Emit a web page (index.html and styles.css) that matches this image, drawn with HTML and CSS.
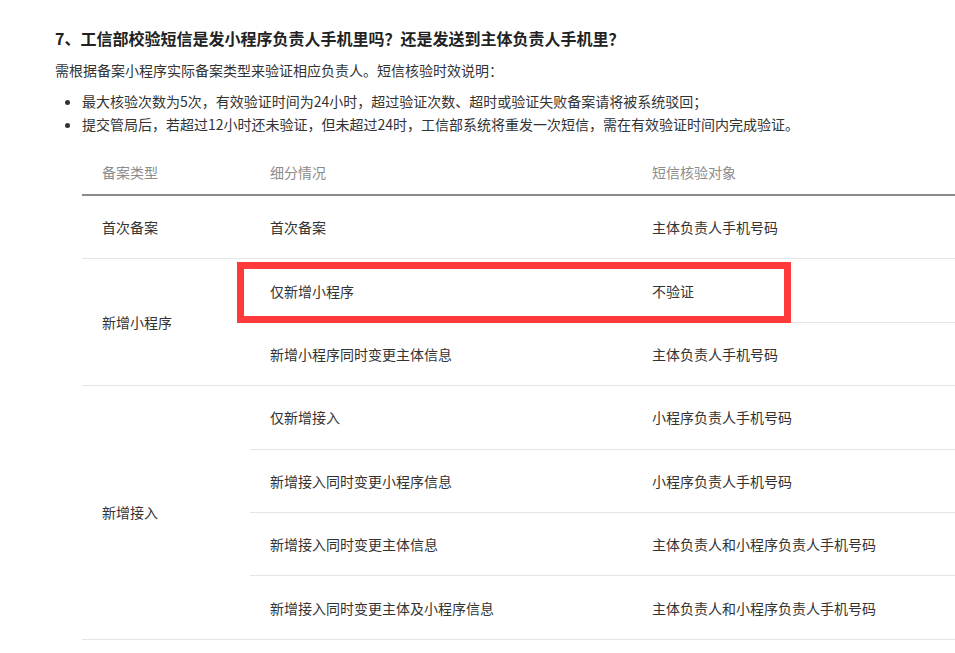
FILE: index.html
```html
<!DOCTYPE html>
<html lang="zh-CN">
<head>
<meta charset="utf-8">
<link rel="stylesheet" href="styles.css">
</head>
<body>
<div class="article">
  <h3 class="title">7、工信部校验短信是发小程序负责人手机里吗？还是发送到主体负责人手机里？</h3>
  <p class="desc">需根据备案小程序实际备案类型来验证相应负责人。短信核验时效说明：</p>
  <ul class="notes">
    <li>最大核验次数为5次，有效验证时间为24小时，超过验证次数、超时或验证失败备案请将被系统驳回；</li>
    <li>提交管局后，若超过12小时还未验证，但未超过24时，工信部系统将重发一次短信，需在有效验证时间内完成验证。</li>
  </ul>
  <div class="table-wrap">
    <table class="sms-table">
      <colgroup>
        <col class="c1"><col class="c2"><col class="c3">
      </colgroup>
      <thead>
        <tr><th>备案类型</th><th>细分情况</th><th>短信核验对象</th></tr>
      </thead>
      <tbody>
        <tr><td>首次备案</td><td>首次备案</td><td>主体负责人手机号码</td></tr>
        <tr><td rowspan="2">新增小程序</td><td>仅新增小程序</td><td>不验证</td></tr>
        <tr><td>新增小程序同时变更主体信息</td><td>主体负责人手机号码</td></tr>
        <tr><td rowspan="4">新增接入</td><td>仅新增接入</td><td>小程序负责人手机号码</td></tr>
        <tr><td>新增接入同时变更小程序信息</td><td>小程序负责人手机号码</td></tr>
        <tr><td>新增接入同时变更主体信息</td><td>主体负责人和小程序负责人手机号码</td></tr>
        <tr><td>新增接入同时变更主体及小程序信息</td><td>主体负责人和小程序负责人手机号码</td></tr>
      </tbody>
    </table>
    <div class="highlight"></div>
  </div>
</div>
</body>
</html>
```

FILE: styles.css
```css
html, body {
  margin: 0;
  padding: 0;
  background: #fff;
  overflow: hidden;
}
body {
  font-family: "Microsoft YaHei", "Noto Sans CJK SC", "Noto Sans", sans-serif;
  font-size: 14px;
  color: #333;
}
.article {
  padding: 25px 0 0 55px;
}
.title {
  margin: 0;
  font-size: 16px;
  font-weight: bold;
  line-height: 26px;
  color: #222;
}
.desc {
  margin: 7px 0 0 0;
  line-height: 24px;
}
.notes {
  margin: 8px 0 0 0;
  padding-left: 27px;
}
.notes li {
  line-height: 23px;
}
.table-wrap {
  position: relative;
  margin: 13px 0 0 27px;
}
.sms-table {
  width: 873px;
  border-collapse: collapse;
  table-layout: fixed;
}
.c1 { width: 168px; }
.c2 { width: 382px; }
.c3 { width: 323px; }
.sms-table th {
  height: 45px;
  padding: 0 0 0 20px;
  text-align: left;
  font-weight: normal;
  color: #8c8c8c;
  border-bottom: 2px solid #8a8a8a;
  vertical-align: middle;
}
.sms-table td {
  height: 62.4px;
  padding: 0 0 0 20px;
  border-bottom: 1px solid #e5e5e5;
  vertical-align: middle;
  line-height: 20px;
  color: #333;
}
.highlight {
  position: absolute;
  left: 155px;
  top: 113px;
  width: 540px;
  height: 47px;
  border: 7px solid #ff3a3a;
}
```
